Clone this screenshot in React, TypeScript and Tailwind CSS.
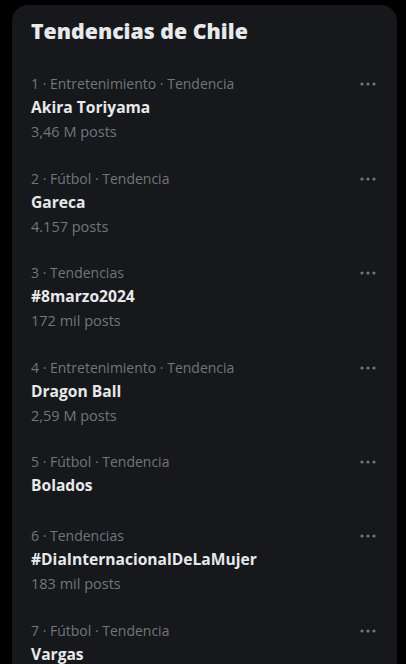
import React from "react";

type Trend = {
  rank: number;
  context: string;
  name: string;
  posts?: string;
};

const trends: Trend[] = [
  { rank: 1, context: "Entretenimiento · Tendencia", name: "Akira Toriyama", posts: "3,46 M posts" },
  { rank: 2, context: "Fútbol · Tendencia", name: "Gareca", posts: "4.157 posts" },
  { rank: 3, context: "Tendencias", name: "#8marzo2024", posts: "172 mil posts" },
  { rank: 4, context: "Entretenimiento · Tendencia", name: "Dragon Ball", posts: "2,59 M posts" },
  { rank: 5, context: "Fútbol · Tendencia", name: "Bolados" },
  { rank: 6, context: "Tendencias", name: "#DiaInternacionalDeLaMujer", posts: "183 mil posts" },
  { rank: 7, context: "Fútbol · Tendencia", name: "Vargas", posts: "1.204 posts" },
];

function Dots() {
  return (
    <svg width="18" height="18" viewBox="0 0 18 18" className="shrink-0 text-[#71767b]">
      <circle cx="3" cy="9" r="1.6" fill="currentColor" />
      <circle cx="9" cy="9" r="1.6" fill="currentColor" />
      <circle cx="15" cy="9" r="1.6" fill="currentColor" />
    </svg>
  );
}

function TrendRow({ t }: { t: Trend }) {
  return (
    <div className="flex flex-col pl-[19px] pr-[20px] pt-[13px] pb-[16px]">
      <div className="flex items-center justify-between text-[14px] leading-[20px] text-[#71767b]">
        <span>
          {t.rank} · {t.context}
        </span>
        <Dots />
      </div>
      <div className="mt-[1px] text-[15.6px] font-bold leading-[24px] text-[#e7e9ea]">{t.name}</div>
      {t.posts && (
        <div className="mt-[3px] -mb-[2.4px] text-[14.5px] leading-[20px] text-[#71767b]">{t.posts}</div>
      )}
    </div>
  );
}

export default function App() {
  return (
    <div
      className="h-[664px] w-[406px] overflow-hidden bg-black pt-[5px]"
      style={{ fontFamily: '"Segoe UI", "Open Sans", "Noto Sans", sans-serif' }}
    >
      <section className="ml-[12px] w-[385px] rounded-2xl bg-[#16181c] pb-4">
        <h2 className="pl-[19px] pr-4 pt-[12px] pb-[16px] text-[21.3px] font-extrabold leading-[28px] text-[#e7e9ea]">
          Tendencias de Chile
        </h2>
        {trends.map((t) => (
          <TrendRow key={t.rank} t={t} />
        ))}
      </section>
    </div>
  );
}
